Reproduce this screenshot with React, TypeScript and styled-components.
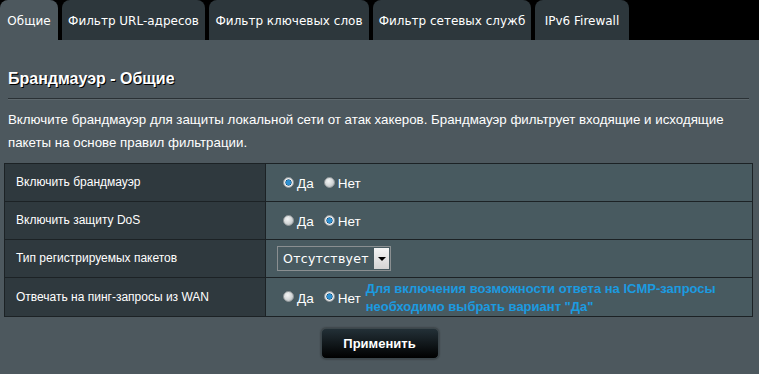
import styled, { createGlobalStyle } from "styled-components";

const GlobalStyle = createGlobalStyle`
    html, body {
        margin: 0;
        padding: 0;
        background: #000;
    }
    body {
        width: 759px;
        height: 374px;
        overflow: hidden;
        font-family: "Liberation Sans", Arial, sans-serif;
    }
`;

const tabs = [
    { label: 'Общие', width: 58 },
    { label: 'Фильтр URL-адресов', width: 143 },
    { label: 'Фильтр ключевых слов', width: 160 },
    { label: 'Фильтр сетевых служб', width: 158 },
    { label: 'IPv6 Firewall', width: 94 },
];

type Choice = 'yes' | 'no';

const Radio = ({ checked }: { checked: boolean }) => <RadioDot $checked={checked} />;

const YesNo = ({ value }: { value: Choice }) => (
    <Options>
        <Option><Radio checked={value === 'yes'} />Да</Option>
        <Option><Radio checked={value === 'no'} />Нет</Option>
    </Options>
);

const App = () => {
    return (
        <>
            <GlobalStyle />
            <Page>
                <TabBar>
                    {tabs.map((tab, index) => (
                        <Tab key={tab.label} $active={index === 0} $width={tab.width}>{tab.label}</Tab>
                    ))}
                </TabBar>
                <Panel>
                    <Heading>Брандмауэр - Общие</Heading>
                    <Rule />
                    <Description>
                        Включите брандмауэр для защиты локальной сети от атак хакеров. Брандмауэр фильтрует входящие и исходящие пакеты на основе правил фильтрации.
                    </Description>
                    <Settings>
                        <tbody>
                            <tr>
                                <Label>Включить брандмауэр</Label>
                                <Value><YesNo value="yes" /></Value>
                            </tr>
                            <tr>
                                <Label>Включить защиту DoS</Label>
                                <Value><YesNo value="no" /></Value>
                            </tr>
                            <tr>
                                <Label>Тип регистрируемых пакетов</Label>
                                <Value>
                                    <Select>
                                        <span>Отсутствует</span>
                                        <SelectArrow />
                                    </Select>
                                </Value>
                            </tr>
                            <tr>
                                <Label>Отвечать на пинг-запросы из WAN</Label>
                                <Value>
                                    <InlineRow>
                                        <YesNo value="no" />
                                        <Hint>Для включения возможности ответа на ICMP-запросы необходимо выбрать вариант "Да"</Hint>
                                    </InlineRow>
                                </Value>
                            </tr>
                        </tbody>
                    </Settings>
                    <Actions>
                        <ApplyButton>Применить</ApplyButton>
                    </Actions>
                </Panel>
            </Page>
        </>
    );
};

const Page = styled.div`
    width: 759px;
    height: 374px;
    display: flex;
    flex-direction: column;
    background: #000;
`;

const TabBar = styled.div`
    display: flex;
    gap: 4px;
    height: 40px;
    flex-shrink: 0;
`;

const Tab = styled.div<{ $active: boolean; $width: number }>`
    width: ${p => p.$width}px;
    display: flex;
    align-items: center;
    justify-content: center;
    border-radius: 8px 8px 0 0;
    background: ${p => p.$active ? '#4d585e' : '#2d373c'};
    color: #fff;
    font-family: "DejaVu Sans", Tahoma, sans-serif;
    font-size: 12px;
    white-space: nowrap;
    padding-top: 1px;
    box-sizing: border-box;
`;

const Panel = styled.div`
    flex: 1;
    background: #4d585e;
    padding: 28px 7px 0 4px;
    color: #fff;
`;

const Heading = styled.h2`
    margin: 0 0 0 4px;
    font-size: 16px;
    line-height: 22px;
    font-weight: bold;
    text-shadow: 1px 1px 0 #000;
`;

const Rule = styled.div`
    height: 1px;
    background: #2a3135;
    border-bottom: 1px solid #5d676c;
    margin: 8px 3px 0 4px;
`;

const Description = styled.p`
    margin: 8px 0 0 4px;
    font-size: 13.3px;
    line-height: 23px;
`;

const Settings = styled.table`
    width: 749px;
    border-collapse: collapse;
    margin-top: 9px;
    border: 1px solid #1c2225;
`;

const Label = styled.td`
    width: 261px;
    height: 38px;
    padding: 0 0 1px 11px;
    box-sizing: border-box;
    background: #2f393e;
    border: 1px solid #1c2225;
    font-size: 12px;
    vertical-align: middle;
`;

const Value = styled.td`
    height: 38px;
    padding: 0 0 0 17px;
    box-sizing: border-box;
    background: #485a60;
    border: 1px solid #1c2225;
    font-size: 13px;
    vertical-align: middle;
`;

const Options = styled.div`
    display: flex;
    gap: 10px;
    align-items: center;
    flex-shrink: 0;
`;

const Option = styled.label`
    display: flex;
    align-items: center;
    gap: 3px;
    font-size: 13.5px;
    padding-top: 2px;
`;

const RadioDot = styled.span<{ $checked: boolean }>`
    width: 11px;
    height: 11px;
    border-radius: 50%;
    margin-top: -3px;
    box-sizing: border-box;
    border: 1px solid #8d9396;
    background: ${p => p.$checked
        ? 'radial-gradient(circle at 50% 50%, #2e8fd0 0 2.2px, #0b4d7a 2.8px, #f2f2f2 3.4px, #cfd2d4 100%)'
        : 'radial-gradient(circle at 40% 35%, #f4f5f5 0, #d6d9da 50%, #a9afb2 100%)'};
`;

const InlineRow = styled.div`
    display: flex;
    align-items: center;
    gap: 5px;
`;

const Hint = styled.div`
    color: #1b9be0;
    font-family: "Liberation Sans", Arial, sans-serif;
    font-weight: bold;
    font-size: 13px;
    line-height: 18px;
    margin-top: 2px;
`;

const Select = styled.div`
    display: inline-flex;
    align-items: center;
    justify-content: space-between;
    width: 114px;
    height: 25px;
    box-sizing: border-box;
    border: 1px solid #8a8f91;
    background: #485a60;
    padding: 0 1px 0 5px;
    font-family: "DejaVu Sans", Verdana, sans-serif;
    font-size: 12.5px;
    letter-spacing: 0.3px;
    margin-left: -6px;
`;

const SelectArrow = styled.span`
    width: 15px;
    height: 21px;
    background: linear-gradient(#f4f4f4, #d4d4d4);
    display: flex;
    align-items: center;
    justify-content: center;
    &::after {
        content: '';
        border-left: 4px solid transparent;
        border-right: 4px solid transparent;
        border-top: 4px solid #000;
    }
`;

const Actions = styled.div`
    display: flex;
    justify-content: center;
    margin-top: 11px;
    padding-left: 3px;
`;

const ApplyButton = styled.button`
    width: 118px;
    height: 31px;
    border-radius: 5px;
    border: 1px solid #3b464b;
    background: linear-gradient(#233037, #000);
    color: #fff;
    font-family: "Liberation Sans", Arial, sans-serif;
    font-weight: bold;
    font-size: 13px;
    box-shadow: 0 0 2px #222;
`;

export default App;
